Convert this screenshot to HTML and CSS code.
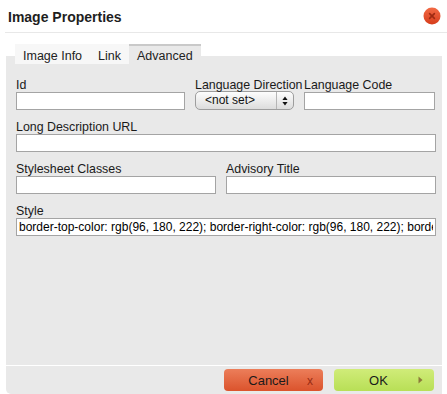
FILE: index.html
```html
<!DOCTYPE html>
<html lang="en">
<head>
  <meta charset="UTF-8" />
  <title>Image Properties</title>
  <meta name="viewport" content="width=device-width, initial-scale=1" />
  <link rel="stylesheet" href="styles.css">
</head>
<body>
  <div class="dialog">
    <!-- Title bar -->
    <div class="titlebar">
      <h1 class="title">Image Properties</h1>
      <a class="close-btn" title="Close">
        <svg width="18" height="18" viewBox="0 0 18 18">
          <defs>
            <linearGradient id="closeGrad" x1="0" y1="0" x2="0" y2="1">
              <stop offset="0" stop-color="#f26a45" />
              <stop offset="1" stop-color="#d63d1c" />
            </linearGradient>
          </defs>
          <circle cx="9" cy="9" r="8.5" fill="url(#closeGrad)" />
          <path d="M6.6 6.6 L11.4 11.4 M11.4 6.6 L6.6 11.4" stroke="#9e2a12" stroke-width="1.6" stroke-linecap="round" />
        </svg>
      </a>
    </div>

    <!-- Tabs -->
    <div class="tabs">
      <span class="tab">Image Info</span>
      <span class="tab">Link</span>
      <span class="tab active">Advanced</span>
    </div>

    <!-- Advanced panel -->
    <div class="panel">
      <div class="row">
        <div class="field field-id">
          <label>Id</label>
          <input type="text" />
        </div>
        <div class="field field-dir">
          <label>Language Direction</label>
          <div class="select">
            <span class="select-value">&lt;not set&gt;</span>
            <span class="select-arrows">
              <svg width="6" height="10" viewBox="0 0 6 10">
                <path d="M3 0.5 L5.6 4 L0.4 4 Z M3 9.5 L5.6 6 L0.4 6 Z" fill="#111" />
              </svg>
            </span>
          </div>
        </div>
        <div class="field field-code">
          <label>Language Code</label>
          <input type="text" />
        </div>
      </div>

      <div class="row">
        <div class="field field-full">
          <label>Long Description URL</label>
          <input type="text" />
        </div>
      </div>

      <div class="row">
        <div class="field field-classes">
          <label>Stylesheet Classes</label>
          <input type="text" />
        </div>
        <div class="field field-title">
          <label>Advisory Title</label>
          <input type="text" />
        </div>
      </div>

      <div class="row">
        <div class="field field-full">
          <label>Style</label>
          <input type="text" value="border-top-color: rgb(96, 180, 222); border-right-color: rgb(96, 180, 222); border-bottom-color: rgb(96, 180, 222); border-left-color: rgb(96, 180, 222);" />
        </div>
      </div>
    </div>

    <!-- Footer buttons -->
    <div class="footer">
      <button class="btn btn-cancel">
        <span class="btn-text">Cancel</span>
        <span class="btn-icon cancel-icon">x</span>
      </button>
      <button class="btn btn-ok">
        <span class="btn-text">OK</span>
        <span class="btn-icon">
          <svg width="5" height="8" viewBox="0 0 5 8">
            <path d="M0.5 0.5 L4.5 4 L0.5 7.5 Z" fill="#8c7a3a" />
          </svg>
        </span>
      </button>
    </div>
  </div>
</body>
</html>
```

FILE: styles.css
```css
* {
  box-sizing: border-box;
}
body {
  margin: 0;
  background: #fff;
  font-family: 'Liberation Sans', Arial, sans-serif;
  color: #222;
}
.dialog {
  width: 447px;
  height: 394px;
  display: flex;
  flex-direction: column;
  background: #fff;
}
.titlebar {
  height: 33px;
  margin-left: 5px;
  padding: 0 6px 0 3px;
  display: flex;
  justify-content: space-between;
  align-items: center;
  border-bottom: 1px solid #e8e8e8;
}
.title {
  margin: 0;
  font-size: 14px;
  font-weight: bold;
  color: #1e1e1e;
  line-height: 16px;
  padding-top: 1px;
}
.close-btn {
  display: flex;
  width: 18px;
  height: 18px;
  cursor: pointer;
}
.tabs {
  position: relative;
  z-index: 1;
  display: flex;
  margin: 11px 0 -8px 15px;
  height: 20px;
}
.tab {
  padding: 2px 8px 0 8px;
  line-height: 16px;
  font-size: 12.5px;
  color: #222;
  background: #f7f7f7;
  border-top: 2px solid #f7f7f7;
}
.tab.active {
  background: #e9e9e9;
  border-top-color: #c9c9c9;
}
.panel {
  flex: 1;
  margin: 0 5px 0 6px;
  padding: 23px 0 0 10px;
  background: #e9e9e9;
}
.row {
  display: flex;
  margin-bottom: 11px;
}
.field label {
  display: block;
  font-size: 12.4px;
  line-height: 13px;
  color: #1a1a1a;
}
.field input {
  display: block;
  width: 100%;
  height: 18px;
  margin: 0;
  padding: 0 2px;
  border: 1px solid #a4a4a4;
  background: #fff;
  font-family: 'Liberation Sans', Arial, sans-serif;
  font-size: 12px;
  color: #000;
  outline: none;
}
.field-id {
  width: 169px;
  margin-right: 10px;
}
.field-dir {
  width: 99px;
  margin-right: 10px;
  white-space: nowrap;
}
.field-code {
  width: 131px;
}
.field-full {
  width: 420px;
}
.field-classes {
  width: 200px;
  margin-right: 10px;
}
.field-title {
  width: 210px;
}
.select {
  display: flex;
  align-items: stretch;
  height: 19px;
  margin-top: -1px;
  border: 1px solid #9d9d9d;
  border-radius: 5px;
  background: linear-gradient(#fdfdfd, #dcdcdc);
  font-size: 12px;
}
.select-value {
  flex: 1;
  padding-left: 9px;
  line-height: 17px;
  color: #111;
}
.select-arrows {
  width: 17px;
  display: flex;
  align-items: center;
  justify-content: center;
  border-left: 1px solid #b5b5b5;
}
.footer {
  height: 29px;
  margin: 0 5px 0 6px;
  padding: 3px 8px 0 0;
  border-top: 1px solid #fff;
  border-bottom-left-radius: 5px;
  background: #e9e9e9;
  display: flex;
  justify-content: flex-end;
  align-items: flex-start;
  gap: 11px;
}
.btn {
  display: grid;
  grid-template-columns: 1fr auto 1fr;
  align-items: center;
  height: 22px;
  padding: 0 10px 0 0;
  border: none;
  border-radius: 4px;
  font-family: 'Liberation Sans', Arial, sans-serif;
  font-size: 13px;
  color: #1a1a1a;
  cursor: pointer;
}
.btn-text {
  grid-column: 2;
}
.btn-icon {
  grid-column: 3;
  justify-self: end;
  display: flex;
  align-items: center;
}
.btn-cancel {
  width: 99px;
  background: linear-gradient(#ec7e5a, #db532c);
}
.cancel-icon {
  font-size: 12px;
  color: #9a2c12;
  padding-top: 1px;
}
.btn-ok {
  width: 100px;
  padding-right: 11px;
  background: linear-gradient(#d0ec79, #b8df56);
}
```
